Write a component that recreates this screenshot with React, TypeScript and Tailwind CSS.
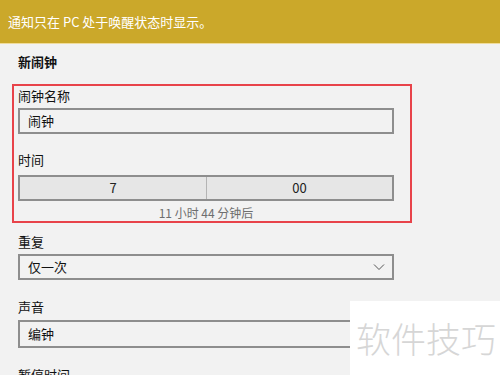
import React from 'react';

const font = { fontFamily: '"Noto Sans CJK SC", "Noto Sans", sans-serif' };

function Label({ text, className = '' }: { text: string; className?: string }) {
  return <div className={`h-[20px] leading-[20px] text-[13px] text-[#111] ${className}`}>{text}</div>;
}

function Box({ text, chevron = false, className = '' }: { text: string; chevron?: boolean; className?: string }) {
  return (
    <div className={`h-[26px] w-[376px] border-2 border-[#8e8e8e] bg-[#f2f2f2] flex items-center justify-between pl-[8px] pr-[6px] text-[13px] text-[#111] ${className}`}>
      <span>{text}</span>
      {chevron && (
        <svg width="12" height="8" viewBox="0 0 12 8" className="mr-[1px]">
          <path d="M1 1.5 L6 6.5 L11 1.5" fill="none" stroke="#555" strokeWidth="1" />
        </svg>
      )}
    </div>
  );
}

export default function App() {
  return (
    <div className="relative w-[500px] h-[375px] overflow-hidden bg-[#f2f2f2]" style={font}>
      <div className="h-[44px] bg-[#cba82a] border-b border-[#f0dc9c] flex items-center px-[8px] text-[13px] text-white">
        通知只在 PC 处于唤醒状态时显示。
      </div>

      <div className="pl-[18px] pt-[8px]">
        <div className="h-[20px] leading-[20px] text-[13px] font-bold text-[#111]">新闹钟</div>
      </div>

      <div className="ml-[12px] mt-[12px] w-[400px] border-2 border-[#e8434a] pl-[4px]">
        <Label text="闹钟名称" />
        <Box text="闹钟" className="mt-[2px]" />
        <Label text="时间" className="mt-[16px]" />
        <div className="mt-[5px] h-[26px] w-[376px] border-2 border-[#8e8e8e] bg-[#e6e6e6] flex text-[13px] text-[#222]">
          <div className="w-[187px] flex items-center justify-center border-r border-[#b4b4b4]">7</div>
          <div className="flex-1 flex items-center justify-center">00</div>
        </div>
        <div className="w-[376px] mt-[4px] h-[16px] leading-[16px] text-center text-[12px] text-[#6e6e6e]">
          11 小时 44 分钟后
        </div>
      </div>

      <div className="pl-[18px]">
        <Label text="重复" className="mt-[9px]" />
        <Box text="仅一次" chevron className="mt-[2px]" />
        <Label text="声音" className="mt-[17px]" />
        <Box text="编钟" className="mt-[3px] h-[28px]" />
        <Label text="暂停时间" className="mt-[17px]" />
      </div>

      <div className="absolute left-[350px] top-[301px] w-[150px] h-[74px] bg-white flex items-center pl-[6px] text-[35px] font-light text-[#d6d6d6]">
        软件技巧
      </div>
    </div>
  );
}
